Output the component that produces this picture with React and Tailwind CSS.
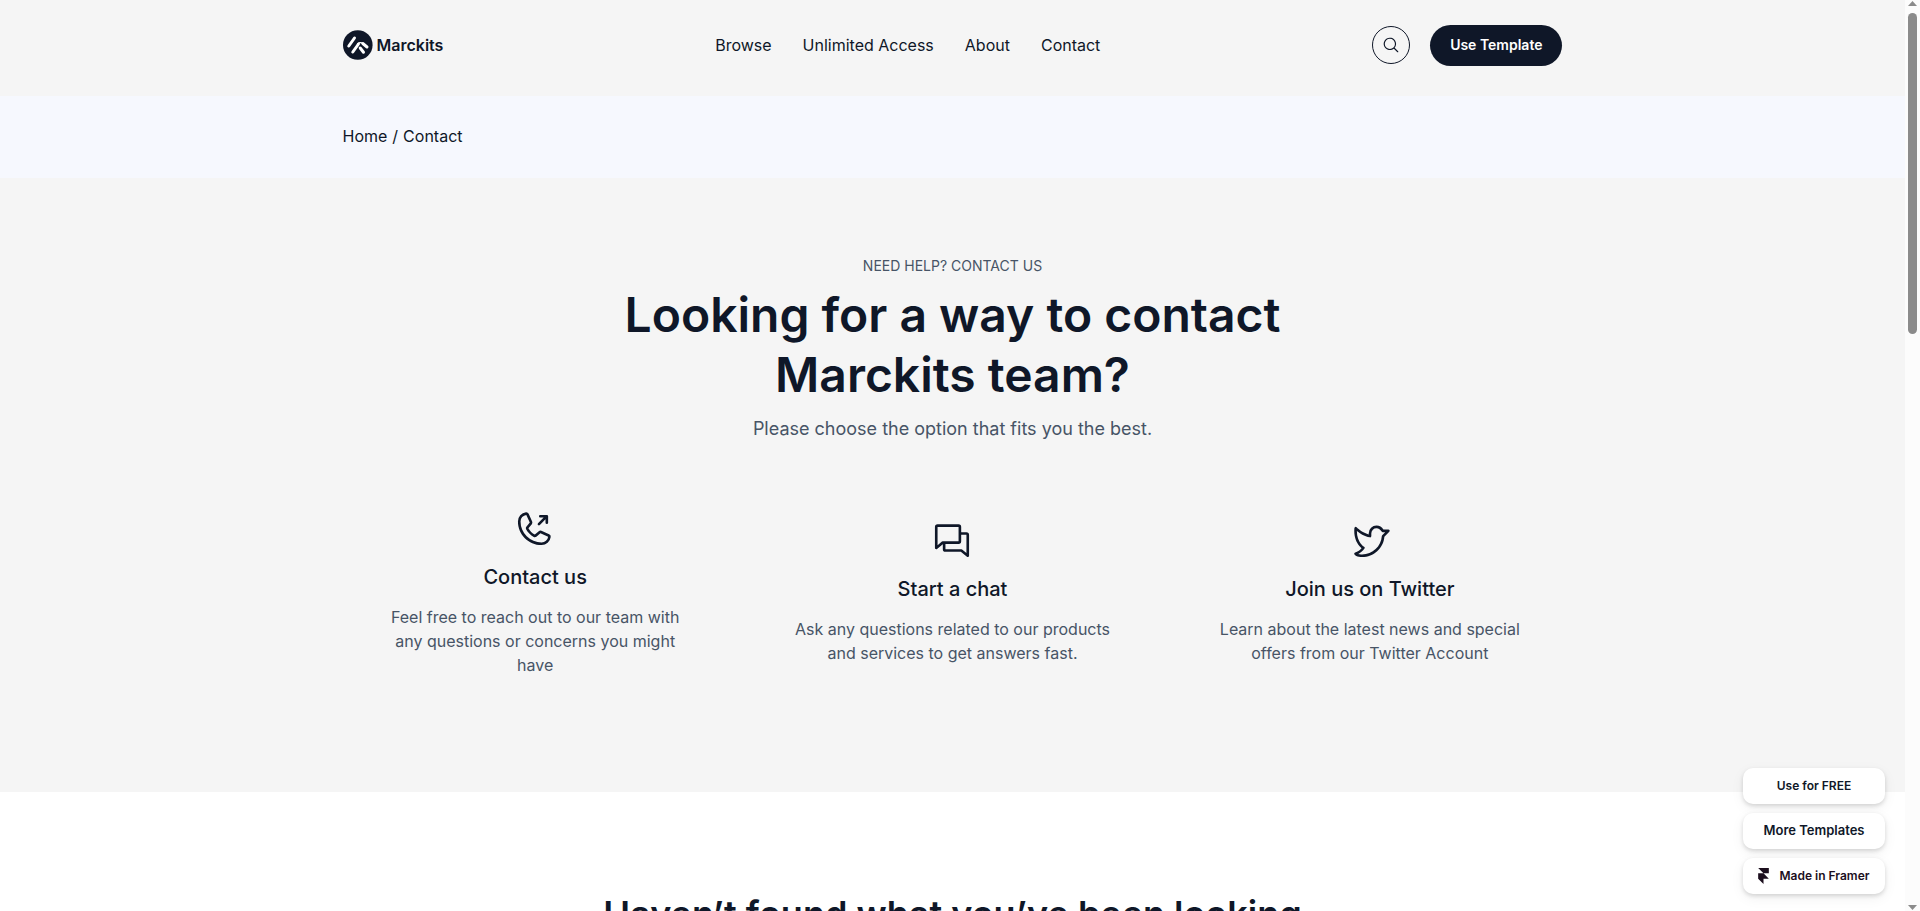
import { PiChats, PiMagnifyingGlass, PiPhoneOutgoing, PiTwitterLogo } from "react-icons/pi";

const navLinks = ["Browse", "Unlimited Access", "About", "Contact"];

const options = [
  { Icon: PiPhoneOutgoing, title: "Contact us", text: "Feel free to reach out to our team with any questions or concerns you might have" },
  { Icon: PiChats, title: "Start a chat", text: "Ask any questions related to our products and services to get answers fast." },
  { Icon: PiTwitterLogo, title: "Join us on Twitter", text: "Learn about the latest news and special offers from our Twitter Account" },
];

function Logo() {
  return (
    <a href="#" className="flex items-center gap-1 text-base font-semibold">
      <svg width="30" height="30" viewBox="0 0 30 30" aria-hidden="true">
        <circle cx="14.8" cy="15" r="14.8" fill="#0f1728" />
        <g stroke="#fff" strokeWidth="3" strokeLinecap="round" fill="none">
          <path d="M5.8 16 11.5 8" />
          <path d="M9.8 22 15.5 14" />
          <path d="M19.8 13.5 24 17" />
          <path d="M17.2 18 20.5 22.2" />
          <path d="M14.5 14c1.200-1.400 3.300-2.200 5.500-.3" strokeWidth="1.200" />
        </g>
      </svg>
      <span>Marckits</span>
    </a>
  );
}

function Header() {
  return (
    <header className="bg-[#f5f5f5]">
      <div className="mx-auto flex h-24 max-w-[1220px] items-center justify-between pb-1.5">
        <Logo />
        <nav className="flex gap-[31px] text-base">
          {navLinks.map((label) => (
            <a key={label} href="#">{label}</a>
          ))}
        </nav>
        <div className="flex items-center justify-end gap-5">
          <button aria-label="Search" className="flex size-[38px] items-center justify-center rounded-full border border-[#0f1728]">
            <PiMagnifyingGlass size={18} />
          </button>
          <a href="#" className="flex h-[41px] items-center rounded-full bg-[#0f1728] px-5 text-sm font-semibold text-white">
            Use Template
          </a>
        </div>
      </div>
    </header>
  );
}

function FramerMark() {
  return (
    <svg width="11" height="16" viewBox="0 0 10 15" fill="currentColor" aria-hidden="true">
      <path d="M0 0h10v5H5zM0 5h5l5 5H0zM0 10h5v5z" />
    </svg>
  );
}

function FloatingLinks() {
  const pill = "flex h-9 items-center justify-center rounded-[10px] bg-white shadow-[0_2px_4px_rgba(0,0,0,0.14),0_4px_14px_rgba(0,0,0,0.06)]";
  return (
    <div className="absolute right-5 bottom-[17px] flex w-[142px] flex-col gap-[9px] text-[13px] font-semibold">
      <a href="#" className={pill + " text-xs"}>Use for FREE</a>
      <a href="#" className={pill}>More Templates</a>
      <a href="#" className={pill + " gap-2.5 text-xs text-[#1c0f1e]"}>
        <FramerMark />
        Made in Framer
      </a>
    </div>
  );
}

function ScrollRail() {
  return (
    <div className="flex w-[15px] shrink-0 flex-col items-center justify-between bg-[#fcfcfc] py-px" aria-hidden="true">
      <svg width="9" height="5" viewBox="0 0 9 5" fill="#8b8b8b"><path d="M0 5 4.5 0 9 5z" /></svg>
      <div className="mt-[7px] flex w-[9px] grow flex-col">
        <div className="h-[321px] rounded-full bg-[#8b8b8b]" />
      </div>
      <svg width="9" height="5" viewBox="0 0 9 5" fill="#8b8b8b"><path d="M0 0 4.5 5 9 0z" /></svg>
    </div>
  );
}

export default function App() {
  return (
    <div className="flex h-screen overflow-hidden bg-white font-['Inter',sans-serif] text-[#0f1728]">
      <div className="relative min-w-0 grow overflow-hidden">
        <Header />
        <div className="bg-[#f6f8fe]">
          <nav aria-label="Breadcrumb" className="mx-auto flex h-[82px] max-w-[1220px] items-center gap-[5px] pb-0.5">
            <a href="#">Home</a>
            <span>/</span>
            <span>Contact</span>
          </nav>
        </div>
        <main>
          <section className="bg-[#f5f5f5] pt-20 pb-[95px] text-center text-[#475466]">
            <p className="text-sm leading-4">NEED HELP? CONTACT US</p>
            <h1 className="mx-auto mt-[11px] max-w-[720px] text-5xl leading-[60px] font-semibold text-[#0f1728]">
              Looking for a way to contact Marckits team?
            </h1>
            <p className="mt-2.5 text-lg leading-7">Please choose the option that fits you the best.</p>
            <div className="mx-auto mt-11 grid max-w-[1252px] grid-cols-3 items-center">
              {options.map(({ Icon, title, text }) => (
                <article key={title} className="flex flex-col items-center px-10 py-5">
                  <Icon size={42} className="text-[#0f1728]" />
                  <h2 className="mt-3 text-xl leading-8 font-medium text-[#0f1728]">{title}</h2>
                  <p className="mt-3 max-w-[320px] text-base leading-6">{text}</p>
                </article>
              ))}
            </div>
          </section>
          <section className="py-[100px] text-center">
            <h2 className="mx-auto max-w-[720px] text-4xl leading-[44px] font-semibold">
              Haven’t found what you’ve been looking for?
            </h2>
          </section>
        </main>
        <FloatingLinks />
      </div>
      <ScrollRail />
    </div>
  );
}
